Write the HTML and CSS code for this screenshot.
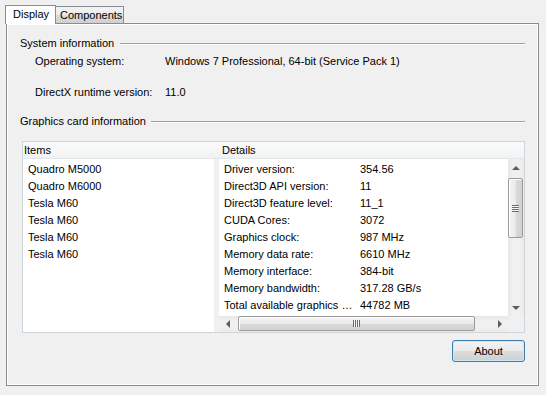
FILE: index.html
```html
<!DOCTYPE html>
<html>
<head>
<meta charset="utf-8">
<link rel="stylesheet" href="styles.css">
</head>
<body>
<div class="tabs">
  <div class="tab tab-active">Display</div>
  <div class="tab tab-inactive">Components</div>
</div>
<div class="panel">
  <div class="group-title"><span>System information</span><div class="rule"></div></div>
  <div class="info-row info-os"><span class="label">Operating system:</span><span class="value">Windows 7 Professional, 64-bit (Service Pack 1)</span></div>
  <div class="info-row info-dx"><span class="label">DirectX runtime version:</span><span class="value">11.0</span></div>
  <div class="group-title group-gfx"><span>Graphics card information</span><div class="rule"></div></div>
  <div class="listview">
    <div class="lv-header">
      <div class="col-items">Items</div>
      <div class="col-details">Details</div>
    </div>
    <div class="lv-body">
      <div class="items">
        <div class="row">Quadro M5000</div>
        <div class="row">Quadro M6000</div>
        <div class="row">Tesla M60</div>
        <div class="row">Tesla M60</div>
        <div class="row">Tesla M60</div>
        <div class="row">Tesla M60</div>
      </div>
      <div class="splitter"></div>
      <div class="details">
        <div class="details-main">
          <div class="details-rows">
            <div class="drow"><span>Driver version:</span><span>354.56</span></div>
            <div class="drow"><span>Direct3D API version:</span><span>11</span></div>
            <div class="drow"><span>Direct3D feature level:</span><span>11_1</span></div>
            <div class="drow"><span>CUDA Cores:</span><span>3072</span></div>
            <div class="drow"><span>Graphics clock:</span><span>987 MHz</span></div>
            <div class="drow"><span>Memory data rate:</span><span>6610 MHz</span></div>
            <div class="drow"><span>Memory interface:</span><span>384-bit</span></div>
            <div class="drow"><span>Memory bandwidth:</span><span>317.28 GB/s</span></div>
            <div class="drow"><span>Total available graphics …</span><span>44782 MB</span></div>
          </div>
          <div class="vscroll">
            <div class="sb-btn"><span class="arr arr-up"></span></div>
            <div class="vtrack"><div class="vthumb"><span class="vgrip"></span></div></div>
            <div class="sb-btn"><span class="arr arr-down"></span></div>
          </div>
        </div>
        <div class="hscroll-row">
          <div class="hscroll">
            <div class="hsb-btn"><span class="arr arr-left"></span></div>
            <div class="hthumb"><span class="hgrip"></span></div>
            <div class="htrack"></div>
            <div class="hsb-btn"><span class="arr arr-right"></span></div>
          </div>
          <div class="corner"></div>
        </div>
      </div>
    </div>
  </div>
  <div class="actions"><button class="btn">About</button></div>
</div>
</body>
</html>
```
FILE: styles.css
```css
html, body {
  margin: 0;
  padding: 0;
}
body {
  background: #f0f0f0;
  font-family: "Liberation Sans", Arial, sans-serif;
  font-size: 11px;
  color: #000;
  width: 546px;
  height: 395px;
  overflow: hidden;
}
.tabs {
  display: flex;
  align-items: flex-end;
  height: 23px;
  padding-left: 5px;
}
.tab {
  box-sizing: border-box;
  border: 1px solid #898c95;
  border-bottom: none;
  line-height: 14px;
  white-space: nowrap;
}
.tab-active {
  width: 51px;
  height: 19px;
  margin-bottom: -1px;
  background: #fff;
  padding: 1px 0 0 7px;
  position: relative;
  z-index: 1;
}
.tab-inactive {
  width: 68px;
  height: 17px;
  border-left: none;
  background: linear-gradient(#f3f3f3, #ebebeb 50%, #dddddd 50%, #cfcfcf);
  padding: 1px 0 0 4px;
}
.panel {
  box-sizing: border-box;
  width: 533px;
  height: 363px;
  margin-left: 6px;
  border: 1px solid #898c95;
  box-shadow: inset 1px 1px 0 #fff, inset -1px -1px 0 #fff;
  padding: 0 13px;
  display: flex;
  flex-direction: column;
  background: #f0f0f0;
}
.group-title {
  display: flex;
  height: 16px;
  line-height: 16px;
  margin-top: 11px;
  gap: 6px;
  white-space: nowrap;
}
.group-gfx {
  margin-top: 13px;
  gap: 5px;
}
.rule {
  flex: 1;
  margin-top: 8px;
  height: 0;
  border-top: 1px solid #a0a0a0;
  border-bottom: 1px solid #fff;
}
.info-row {
  display: flex;
  height: 16px;
  line-height: 16px;
  padding-left: 15px;
  white-space: nowrap;
}
.info-os {
  margin-top: 2px;
}
.info-dx {
  margin-top: 15px;
}
.label {
  width: 130px;
}
.listview {
  box-sizing: border-box;
  margin: 12px 0 0 2px;
  height: 192px;
  border: 1px solid #cdd5dd;
  display: flex;
  flex-direction: column;
  background: #fff;
}
.lv-header {
  box-sizing: border-box;
  height: 17px;
  line-height: 16px;
  display: flex;
  background: linear-gradient(#fbfbfb, #f1f2f3);
  border-bottom: 1px solid #e2e5e9;
}
.col-items {
  width: 196px;
  padding-left: 1px;
  box-sizing: border-box;
}
.col-details {
  padding-left: 3px;
}
.lv-body {
  flex: 1;
  display: flex;
  min-height: 0;
}
.items {
  box-sizing: border-box;
  width: 191px;
  background: #fff;
  padding: 2px 0 0 5px;
}
.row {
  height: 17px;
  line-height: 17px;
  white-space: nowrap;
}
.splitter {
  width: 5px;
  background: #f0f0f0;
}
.details {
  width: 305px;
  display: flex;
  flex-direction: column;
}
.details-main {
  flex: 1;
  display: flex;
  min-height: 0;
}
.details-rows {
  flex: 1;
  background: #fff;
  padding: 2px 0 0 5px;
  overflow: hidden;
}
.drow {
  display: grid;
  grid-template-columns: 136px auto;
  height: 17px;
  line-height: 17px;
  white-space: nowrap;
}
.vscroll {
  width: 16px;
  display: flex;
  flex-direction: column;
  background: linear-gradient(to right, #e6e6e6, #f0f0f0 30%, #f0f0f0 70%, #ebebeb);
}
.sb-btn {
  height: 17px;
  display: flex;
  align-items: center;
  justify-content: center;
}
.vtrack {
  flex: 1;
  padding-top: 2px;
}
.vthumb {
  box-sizing: border-box;
  width: 15px;
  height: 60px;
  border: 1px solid #9b9b9b;
  border-radius: 2px;
  background: linear-gradient(to right, #f6f6f6, #e9e9e9 50%, #d9d9d9 51%, #d2d2d2);
  box-shadow: inset 1px 1px 0 #fff;
  display: flex;
  align-items: center;
  justify-content: center;
}
.vgrip {
  width: 7px;
  height: 7px;
  background: repeating-linear-gradient(#6e6e6e 0 1px, #f4f4f4 1px 2px);
}
.arr {
  width: 0;
  height: 0;
  display: block;
}
.arr-up {
  border-left: 4px solid transparent;
  border-right: 4px solid transparent;
  border-bottom: 4px solid #5d5d5d;
}
.arr-down {
  border-left: 4px solid transparent;
  border-right: 4px solid transparent;
  border-top: 4px solid #5d5d5d;
}
.arr-left {
  border-top: 4px solid transparent;
  border-bottom: 4px solid transparent;
  border-right: 4px solid #5d5d5d;
}
.arr-right {
  border-top: 4px solid transparent;
  border-bottom: 4px solid transparent;
  border-left: 4px solid #5d5d5d;
}
.hscroll-row {
  height: 16px;
  display: flex;
}
.hscroll {
  flex: 1;
  display: flex;
  background: linear-gradient(#e6e6e6, #f0f0f0 30%, #f0f0f0 70%, #ebebeb);
}
.hsb-btn {
  width: 17px;
  display: flex;
  align-items: center;
  justify-content: center;
}
.hthumb {
  box-sizing: border-box;
  margin-left: 2px;
  width: 237px;
  height: 15px;
  border: 1px solid #9b9b9b;
  border-radius: 2px;
  background: linear-gradient(#f6f6f6, #e9e9e9 50%, #d9d9d9 51%, #d2d2d2);
  box-shadow: inset 1px 1px 0 #fff;
  display: flex;
  align-items: center;
  justify-content: center;
}
.hgrip {
  width: 7px;
  height: 7px;
  background: repeating-linear-gradient(to right, #6e6e6e 0 1px, #f4f4f4 1px 2px);
}
.htrack {
  flex: 1;
}
.corner {
  width: 16px;
  background: #f0f0f0;
}
.actions {
  display: flex;
  justify-content: flex-end;
  margin-top: 7px;
}
.btn {
  box-sizing: border-box;
  width: 73px;
  height: 22px;
  border: 1px solid #3c7fb1;
  border-radius: 3px;
  background: linear-gradient(#f2f2f2, #ebebeb 50%, #dddddd 50%, #cfcfcf);
  box-shadow: inset 0 0 0 1px #c5e9fb;
  font-family: inherit;
  font-size: 11px;
  color: #000;
  padding: 0;
}
```
